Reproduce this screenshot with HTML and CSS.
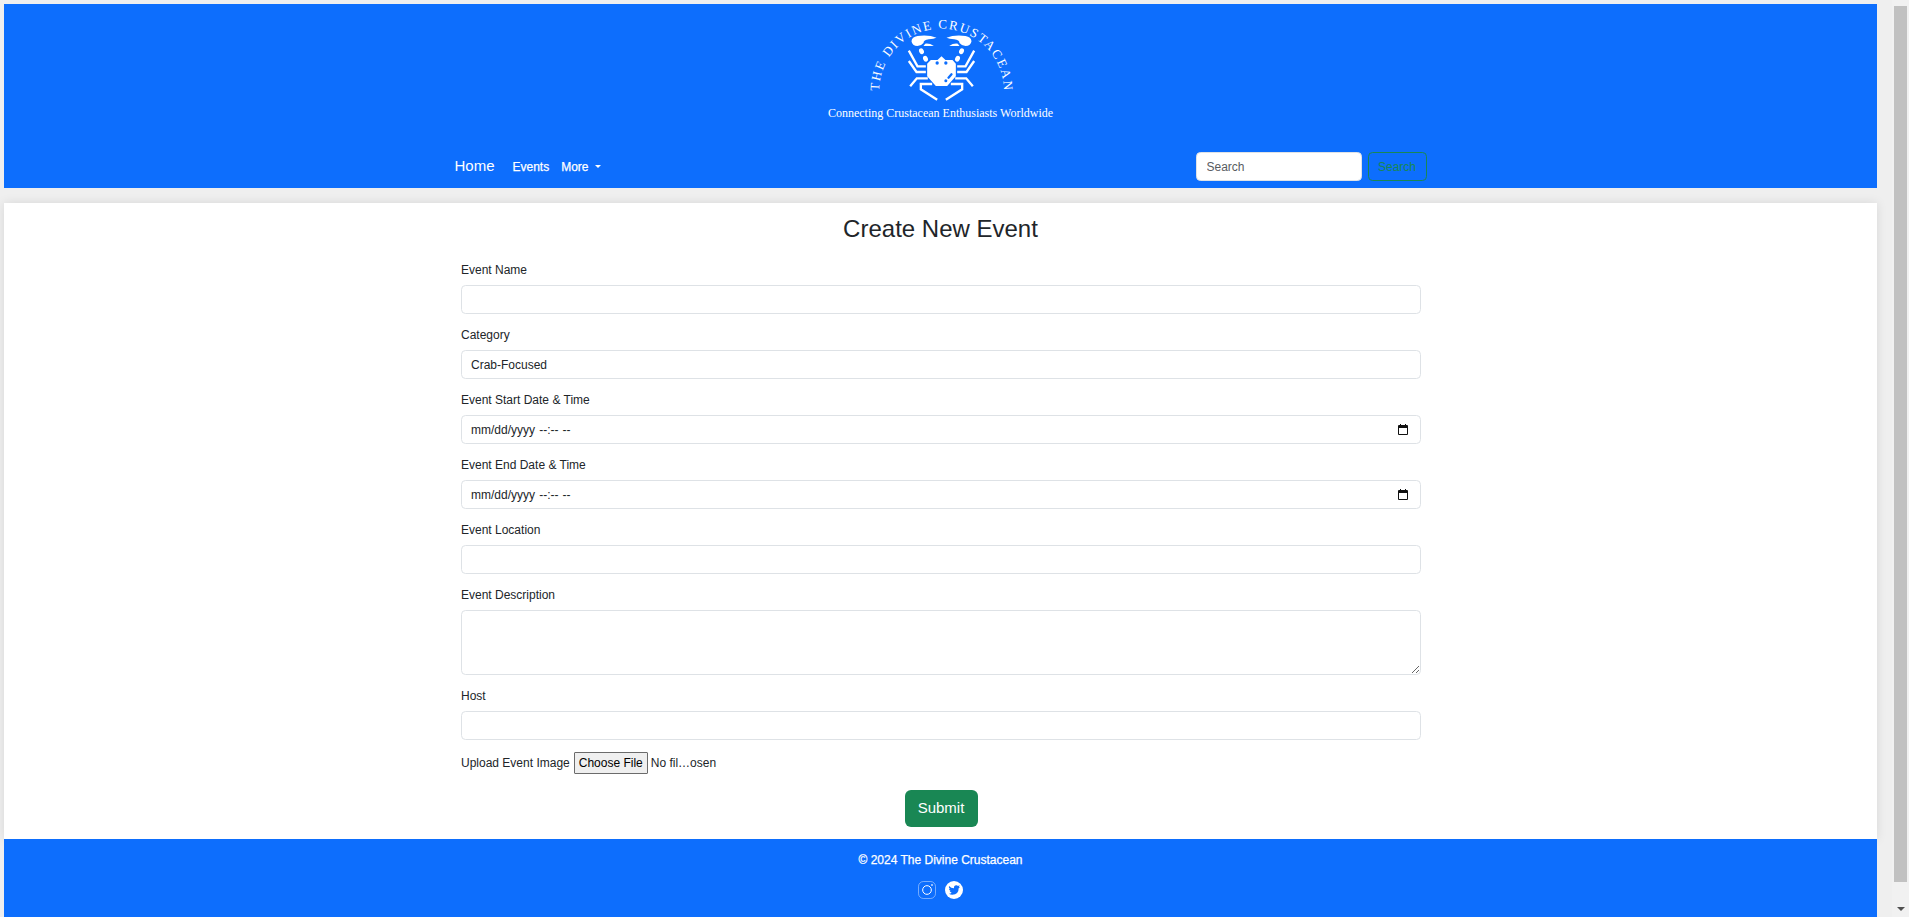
FILE: index.html
```
<!DOCTYPE html>
<html lang="en-US">
<head>
<meta charset="utf-8">
<title>Create New Event</title>
<link rel="stylesheet" href="styles.css">
</head>
<body>
<div class="page">
  <header class="header">
    <svg class="logo" viewBox="121.5 36 480 270" width="160" height="90">
      <defs><path id="arc" d="M176 273 A187 187 0 0 1 550 273"/></defs>
      <text class="logo-text"><textPath href="#arc" textLength="585" lengthAdjust="spacing">THE DIVINE CRUSTACEAN</textPath></text>
      <g fill="#fff">
        <path d="M348 113 Q325 104 291 108 Q274 111 273 124 Q275 138 291 138 Q303 137 309 129 Q309 120 325 118 Q340 117 348 113Z"/>
        <path d="M309 138 L314 131 Q327 129 340 138Z"/>
        <path d="M378 113 Q401 104 435 108 Q452 111 453 124 Q451 138 435 138 Q423 137 417 129 Q417 120 401 118 Q386 117 378 113Z"/>
        <path d="M417 138 L412 131 Q399 129 386 138Z"/>
        <ellipse cx="303" cy="154" rx="7" ry="9" transform="rotate(-25 303 154)"/>
        <ellipse cx="423" cy="154" rx="7" ry="9" transform="rotate(25 423 154)"/>
        <ellipse cx="315" cy="176" rx="7" ry="9" transform="rotate(-25 315 176)"/>
        <ellipse cx="411" cy="176" rx="7" ry="9" transform="rotate(25 411 176)"/>
        <path d="M331 180 H351 L363 169 L375 180 H396 L406 191 V229 L380 258 H346 L320 229 V191Z"/>
      </g>
      <g fill="none" stroke="#fff" stroke-width="7">
        <path d="M265 152 L291 199 H316"/><path d="M461 152 L435 199 H410"/>
        <path d="M265 183 L288 216 H316"/><path d="M461 183 L438 216 H410"/>
        <path d="M269 259 L289 235 H322"/><path d="M457 259 L437 235 H404"/>
        <path d="M335 252 H301 V268 L350 299"/><path d="M391 252 H425 V268 L376 299"/>
      </g>
      <g fill="#0d6efd"><circle cx="350" cy="189" r="5"/><circle cx="376" cy="189" r="5"/><circle cx="376" cy="242" r="4.5"/></g>
      <path d="M384 233 L393 223" stroke="#0d6efd" stroke-width="7" stroke-linecap="round"/>
    </svg>
    <p class="tagline">Connecting Crustacean Enthusiasts Worldwide</p>
    <nav class="nav">
      <a class="brand">Home</a>
      <a class="link">Events</a>
      <a class="link more">More</a>
      <form class="search">
        <input class="control search-input" type="text" placeholder="Search">
        <button class="search-button" type="button">Search</button>
      </form>
    </nav>
  </header>
  <main class="card">
    <h1 class="title">Create New Event</h1>
    <form class="form">
      <div class="field"><label>Event Name</label><input class="control" type="text"></div>
      <div class="field"><label>Category</label><select class="control"><option>Crab-Focused</option></select></div>
      <div class="field"><label>Event Start Date &amp; Time</label>
        <div class="control date"><span>mm/dd/yyyy --:-- --</span>
          <svg width="10" height="11" viewBox="0 0 10 11"><path d="M1 1h1V0h1v1h4V0h1v1h1q1 0 1 1v8q0 1-1 1H1q-1 0-1-1V2q0-1 1-1zM1 4v6h8V4z" fill="#111" fill-rule="evenodd"/></svg>
        </div></div>
      <div class="field"><label>Event End Date &amp; Time</label>
        <div class="control date"><span>mm/dd/yyyy --:-- --</span>
          <svg width="10" height="11" viewBox="0 0 10 11"><path d="M1 1h1V0h1v1h4V0h1v1h1q1 0 1 1v8q0 1-1 1H1q-1 0-1-1V2q0-1 1-1zM1 4v6h8V4z" fill="#111" fill-rule="evenodd"/></svg>
        </div></div>
      <div class="field"><label>Event Location</label><input class="control" type="text"></div>
      <div class="field"><label>Event Description</label><textarea class="control area"></textarea></div>
      <div class="field"><label>Host</label><input class="control" type="text"></div>
      <div class="upload"><label>Upload Event Image</label><input class="file" type="file"></div>
      <button class="submit" type="button">Submit</button>
    </form>
  </main>
  <footer class="footer">
    <p class="copyright">© 2024 The Divine Crustacean</p>
    <div class="social">
      <svg width="18" height="18" viewBox="0 0 54 54" fill="none" stroke="#fff" stroke-width="2">
        <rect x="1.5" y="1.5" width="51" height="51" rx="15" opacity=".65"/>
        <circle cx="27" cy="27" r="13" stroke-width="3"/><circle cx="42" cy="12" r="2" stroke-width="2"/>
      </svg>
      <svg width="18" height="18" viewBox="0 0 54 54">
        <circle cx="27" cy="27" r="27" fill="#fff"/>
        <path fill="#0d6efd" d="M12 15 Q18 22 27 22 Q26 13 34 13 Q37 13 39 15 L44 13 L42 18 L45 18 L41 22 Q41 41 22 41 Q16 41 12 38 Q17 38 20 35 Q16 34 14 30 L17 30 Q12 27 12 23 L15 24 Q10 20 12 15Z"/>
      </svg>
    </div>
  </footer>
</div>
<div class="scrollbar"><div class="thumb"></div><div class="arrow"></div></div>
</body>
</html>
```
FILE: styles.css
```
* { box-sizing: border-box; }
html, body { height: 100%; overflow: hidden; }
body {
  margin: 0;
  display: flex;
  background: #efefef;
  color: #212529;
  font: 12px/18px "Liberation Sans", Arial, sans-serif;
}
p, h1 { margin: 0; }
input, select, textarea, button { font: inherit; margin: 0; }
.page {
  width: 1873px;
  margin: 4px 15px 0 4px;
  display: flex;
  flex-direction: column;
}
.header {
  height: 184px;
  padding-top: 8px;
  background: #0d6efd;
  color: #fff;
  display: flex;
  flex-direction: column;
  align-items: center;
}
.logo { display: block; }
.logo-text { font: 39px "Liberation Serif", "Times New Roman", serif; fill: #fff; }
.tagline {
  margin-top: 2px;
  font-family: "Liberation Serif", "Times New Roman", serif;
  white-space: nowrap;
}
.nav {
  width: 972px;
  margin-top: 30px;
  display: flex;
  align-items: center;
}
.brand { font-size: 15px; margin-right: 18px; padding-bottom: 2px; }
.link { margin-right: 12px; }
.link, .copyright { -webkit-text-stroke: .25px #fff; }
.more::after {
  content: "";
  display: inline-block;
  margin-left: 6px;
  vertical-align: 3px;
  border: 3px solid transparent;
  border-top-color: #fff;
  border-bottom: 0;
}
.search { margin-left: auto; display: flex; gap: 6px; }
.control {
  display: block;
  width: 100%;
  height: 29px;
  padding: 4.5px 9px;
  border: 1px solid #dee2e6;
  border-radius: 4.5px;
  background: #fff;
  color: #212529;
  appearance: none;
  outline: 0;
}
.date {
  display: flex;
  align-items: center;
  justify-content: space-between;
  padding-right: 12px;
  word-spacing: .8px;
}
.search-input { width: 166px; padding-left: 10px; }
.search-input::placeholder { color: #595c5f; }
.search-button {
  width: 59px;
  padding: 0;
  border: 1px solid #198754;
  border-radius: 4.5px;
  background: transparent;
  color: #198754;
}
.card {
  height: 636px;
  margin-top: 15px;
  padding-top: 11px;
  background: #fff;
  box-shadow: 0 0 10px rgba(0, 0, 0, .1);
}
.title { font-size: 24px; font-weight: 400; line-height: 29px; text-align: center; }
.form { width: 960px; margin: 18px 0 0 457px; display: flex; flex-direction: column; }
.field { margin-bottom: 12px; }
.field label { display: block; margin-bottom: 6px; }
.area { height: 65px; resize: vertical; }
.upload { height: 22px; display: flex; align-items: center; gap: 4px; }
.file { width: 146px; height: 22px; line-height: normal; }
.file::file-selector-button {
  height: 22px;
  margin: 0 3px 0 0;
  padding: 0 4px;
  border: 1px solid #6b6b6b;
  border-radius: 1px;
  background: #efefef;
  color: #000;
  font: inherit;
}
.submit {
  width: 73px;
  height: 37px;
  margin: 16px auto 0;
  padding: 0 0 2px;
  border: 0;
  border-radius: 6px;
  background: #198754;
  color: #fff;
  font-size: 15px;
}
.footer {
  position: relative;
  height: 78px;
  padding-top: 12px;
  background: #0d6efd;
  color: #fff;
  text-align: center;
}
.social { display: flex; justify-content: center; gap: 9px; margin-top: 12px; }
.scrollbar {
  width: 17px;
  padding: 6px 2px 6px;
  background: #f1f1f1;
  display: flex;
  flex-direction: column;
  align-items: center;
  justify-content: space-between;
}
.thumb { width: 13px; height: 876px; background: #c1c1c1; }
.arrow { border: 4px solid transparent; border-top-color: #505050; border-bottom: 0; }
```
